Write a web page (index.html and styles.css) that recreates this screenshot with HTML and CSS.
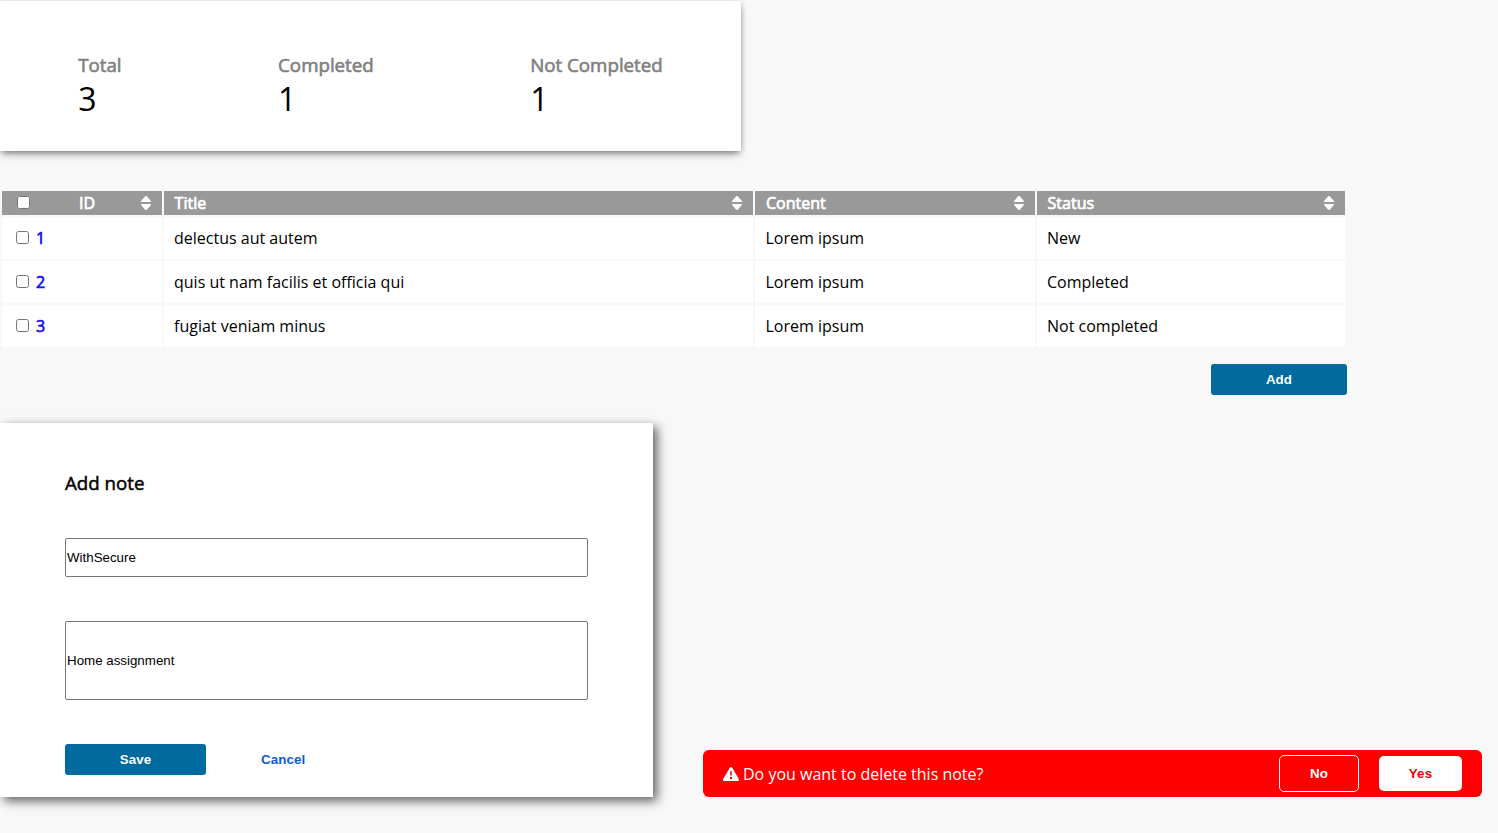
FILE: index.html
```html
<!DOCTYPE html>
<html lang="en">
<head>
<meta charset="utf-8">
<title>Notes</title>
<link rel="stylesheet" href="styles.css">
</head>
<body>
<svg class="sprite" width="0" height="0">
  <symbol id="sort" viewBox="0 0 10 14"><path d="M5 0c.3 0 .6.1.8.3l3.9 4.4c.6.7.2 1.3-.6 1.3H.9C.1 6-.3 5.400.3 4.700L4.200.3C4.400.1 4.700 0 5 0zM5 14c.3 0 .6-.1.8-.3l3.900-4.400c.6-.7.2-1.300-.6-1.300H.9c-.8 0-1.200.6-.6 1.300l3.900 4.400c.2.2.5.3.8.3z"/></symbol>
</svg>
<section class="summary">
  <div class="stat"><span class="stat-label">Total</span><span class="stat-value">3</span></div>
  <div class="stat"><span class="stat-label">Completed</span><span class="stat-value">1</span></div>
  <div class="stat"><span class="stat-label">Not Completed</span><span class="stat-value">1</span></div>
</section>
<main>
  <table class="notes">
    <colgroup><col class="col-id"><col class="col-title"><col class="col-content"><col class="col-status"></colgroup>
    <thead>
      <tr>
        <th><div class="head head-id"><input type="checkbox" class="check"><span>ID</span><svg class="sort"><use href="#sort"/></svg></div></th>
        <th><div class="head"><span>Title</span><svg class="sort"><use href="#sort"/></svg></div></th>
        <th><div class="head"><span>Content</span><svg class="sort"><use href="#sort"/></svg></div></th>
        <th><div class="head"><span>Status</span><svg class="sort"><use href="#sort"/></svg></div></th>
      </tr>
    </thead>
    <tbody>
      <tr><td><div class="id-cell"><input type="checkbox" class="check"><span class="note-id">1</span></div></td><td>delectus aut autem</td><td>Lorem ipsum</td><td>New</td></tr>
      <tr><td><div class="id-cell"><input type="checkbox" class="check"><span class="note-id">2</span></div></td><td>quis ut nam facilis et officia qui</td><td>Lorem ipsum</td><td>Completed</td></tr>
      <tr><td><div class="id-cell"><input type="checkbox" class="check"><span class="note-id">3</span></div></td><td>fugiat veniam minus</td><td>Lorem ipsum</td><td>Not completed</td></tr>
    </tbody>
  </table>
  <div class="table-actions"><button class="btn btn-add">Add</button></div>
</main>
<form class="note-form">
  <h2 class="form-title">Add note</h2>
  <input class="field" type="text" value="WithSecure">
  <input class="field field-tall" type="text" value="Home assignment">
  <div class="form-actions"><button type="button" class="btn btn-save">Save</button><button type="button" class="btn-cancel">Cancel</button></div>
</form>
<div class="toast">
  <svg class="warn" viewBox="0 0 16 14"><path fill-rule="evenodd" d="M6.900.6c.5-.8 1.700-.8 2.200 0l6.700 11.400c.5.9-.1 2-1.100 2H1.300c-1 0-1.600-1.100-1.100-2zM7.200 4.300v4.200h1.600V4.300zM7 10h2v2H7z"/></svg>
  <span class="toast-text">Do you want to delete this note?</span>
  <button class="toast-btn toast-no">No</button>
  <button class="toast-btn toast-yes">Yes</button>
</div>
</body>
</html>
```
FILE: styles.css
```css
* { box-sizing: border-box; }
body {
  margin: 0;
  padding-top: 1px;
  height: 833px;
  overflow: hidden;
  background: #f8f8f8;
  color: #000;
  font: 16px/22px "Open Sans", sans-serif;
}
button { font: bold 13.333px "Liberation Sans", Arial, sans-serif; letter-spacing: .1px; padding: 0; }
.sprite { display: none; }
.summary {
  display: flex;
  justify-content: space-around;
  width: 741px;
  height: 150px;
  padding-top: 51px;
  background: #fff;
  box-shadow: 0 4px 8px -2px rgba(0,0,0,.5), 0 1px 5px rgba(0,0,0,.15);
}
.stat { display: flex; flex-direction: column; }
.stat-label { font-size: 18.72px; line-height: 25px; color: #808080; -webkit-text-stroke: .6px #808080; }
.stat-value { font-size: 32px; line-height: 43px; }
.notes { width: 1347px; margin-top: 38px; border-spacing: 2px; table-layout: fixed; }
.col-id { width: 160px; }
.col-title { width: 589px; }
.col-content { width: 280px; }
.col-status { width: 308px; }
th { height: 24px; padding: 0 10px 0 10.600px; background: #999; color: #fff; font-weight: 400; text-align: left; -webkit-text-stroke: .7px #fff; }
th:nth-child(3) { padding-left: 11px; }
td { height: 42px; padding: 0 10px; background: #fff; }
td:nth-child(3) { padding-left: 10.500px; }
.head { display: flex; align-items: center; justify-content: space-between; }
.head-id { padding-left: 4.400px; }
.head-id span { padding-left: 4px; }
.sort { width: 12px; height: 14px; fill: #fff; stroke: none; }
.check { width: 13px; height: 13px; margin: 0 0 1px; }
.id-cell { display: flex; align-items: center; gap: 7px; padding-left: 4px; }
.note-id { color: #1a10ee; -webkit-text-stroke: .7px #1a10ee; }
.table-actions { display: flex; justify-content: flex-end; width: 1347px; padding-top: 15px; }
.btn { height: 31px; border: 0; border-radius: 3px; background: #00699e; color: #fff; }
.btn-add { width: 136px; }
.note-form {
  width: 653px;
  height: 374px;
  margin-top: 28px;
  padding: 47px 65px 0;
  background: #fff;
  box-shadow: 4px 4px 10px rgba(0,0,0,.62);
}
.form-title { margin: 0 0 43px; font-size: 18.72px; line-height: 25px; font-weight: 400; -webkit-text-stroke: .5px #000; }
.field {
  display: block;
  width: 523px;
  height: 39px;
  margin-bottom: 44px;
  padding: 1px;
  border: 1px solid #767676;
  border-radius: 2px;
  background: #fff;
  font: 13.333px "Liberation Sans", Arial, sans-serif;
}
.field-tall { height: 79px; }
.form-actions { display: flex; align-items: center; gap: 55px; }
.btn-save { width: 141px; }
.btn-cancel { border: 0; background: none; color: #0b5bd3; }
.toast {
  position: fixed;
  right: 16px;
  bottom: 36px;
  display: flex;
  align-items: center;
  width: 779px;
  height: 47px;
  padding: 0 20px;
  border-radius: 6px;
  background: #f00;
  color: #fff;
}
.warn { width: 16px; height: 14px; margin-right: 4px; fill: #fff; }
.toast-text { margin-right: auto; }
.toast-btn { border-radius: 5px; }
.toast-no { width: 80px; height: 37px; margin-right: 20px; border: 1px solid #fff; background: none; color: #fff; }
.toast-yes { width: 83px; height: 35px; border: 0; background: #fff; color: #e00; }
```
